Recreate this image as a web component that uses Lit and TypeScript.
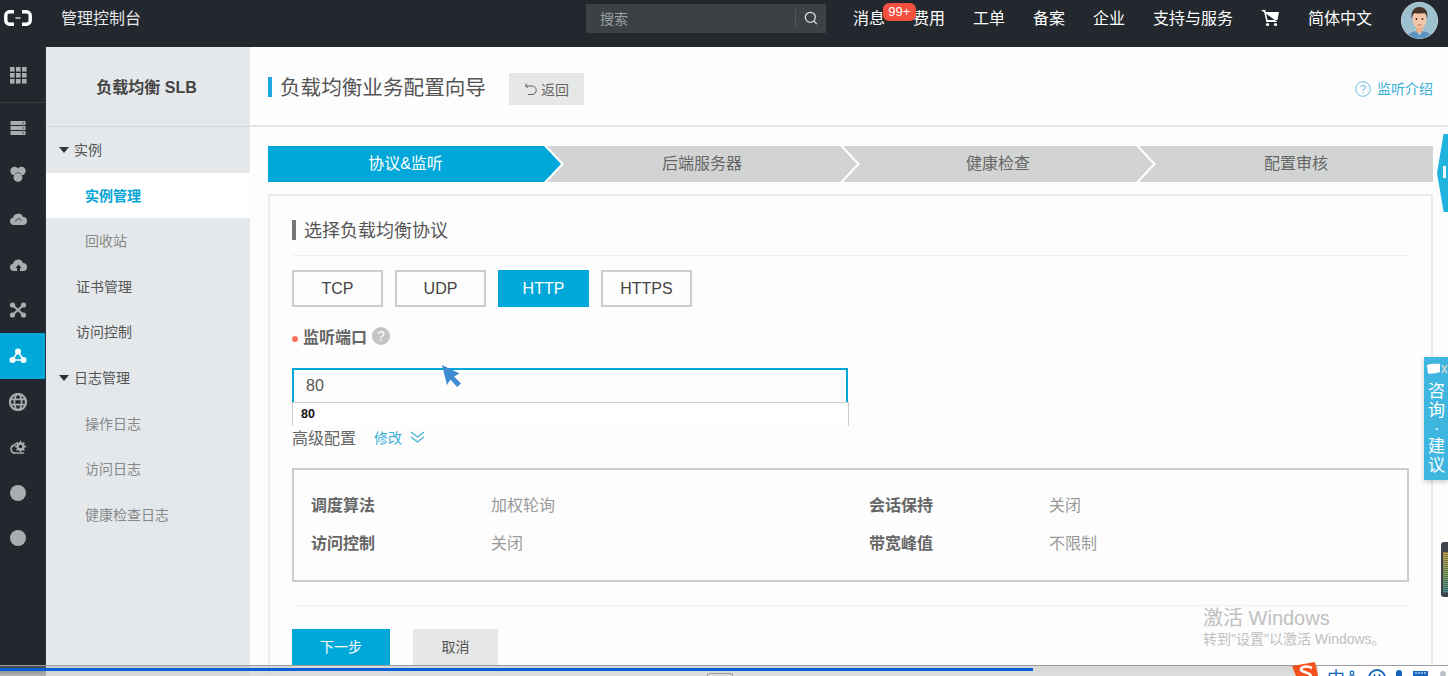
import { LitElement, html, css, svg } from "lit";
import { customElement } from "lit/decorators.js";

const railIcons = [
  svg`<g fill="#a9adb1">${[0, 6, 12].flatMap((y) => [0, 6, 12].map((x) => svg`<rect x="${x + 1}" y="${y + 1}" width="4.600" height="4.600"/>`))}</g>`,
  svg`<g fill="#a9adb1"><rect x="1.500" y="2" width="15" height="4"/><rect x="1.500" y="7" width="15" height="4"/><rect x="1.500" y="12" width="15" height="4"/></g><g fill="#23282e"><circle cx="14" cy="4" r=".7"/><circle cx="14" cy="9" r=".7"/><circle cx="14" cy="14" r=".7"/></g>`,
  svg`<g fill="#a9adb1"><circle cx="5.500" cy="6" r="4.200"/><circle cx="12.500" cy="6" r="4.200"/><circle cx="9" cy="12.500" r="4.400"/></g><path d="M5.500 9 9 7.500 12.500 9" stroke="#23282e" stroke-width=".6" fill="none"/>`,
  svg`<path d="M4.500 15a3.700 3.700 0 0 1-.6-7.300A5.300 5.300 0 0 1 14 7a4 4 0 0 1 0 8z" fill="#a9adb1"/><path d="M6 11.500 9.500 8l3 3" stroke="#23282e" stroke-width=".8" fill="none"/>`,
  svg`<path d="M4.500 15a3.700 3.700 0 0 1-.6-7.300A5.300 5.300 0 0 1 14 7a4 4 0 0 1 0 8h-3v-3h1.600L9.500 8.600 6.400 12H8v3z" fill="#a9adb1"/>`,
  svg`<g fill="#a9adb1"><circle cx="3.500" cy="4" r="2.600"/><circle cx="14.500" cy="4" r="2.600"/><circle cx="3.500" cy="14" r="2.600"/><circle cx="14.500" cy="14" r="2.600"/></g><path d="M4 4.500l10 9M14 4.500l-10 9" stroke="#a9adb1" stroke-width="2.200"/>`,
  svg`<g fill="#fff"><circle cx="9" cy="4.500" r="3"/><circle cx="3.500" cy="13" r="3"/><circle cx="14.500" cy="13" r="3"/></g><path d="M9 4.500 3.500 13h11z" fill="none" stroke="#fff" stroke-width="1.600"/>`,
  svg`<circle cx="9" cy="9" r="8" fill="none" stroke="#a9adb1" stroke-width="2.200"/><ellipse cx="9" cy="9" rx="3.600" ry="8" fill="none" stroke="#a9adb1" stroke-width="1.800"/><path d="M1.500 6.300h15M1.500 11.700h15" stroke="#a9adb1" stroke-width="1.800"/>`,
  svg`<path d="M6 15a4 4 0 0 1-.8-7.900A4.600 4.600 0 0 1 9 5" fill="none" stroke="#a9adb1" stroke-width="1.600"/><circle cx="11.500" cy="8.500" r="4.200" fill="#a9adb1"/><path d="M11.500 2.800v11.400M5.800 8.500h11.400M7.600 4.600l7.800 7.800M15.400 4.600l-7.800 7.800" stroke="#a9adb1" stroke-width="1.500"/><path d="M4 15h11" stroke="#a9adb1" stroke-width="1.400"/><circle cx="11.500" cy="8.500" r="1.800" fill="#23282e"/>`,
  svg`<circle cx="9" cy="9" r="8" fill="#a9adb1"/>`,
  svg`<circle cx="9" cy="9" r="8" fill="#a9adb1"/>`,
];

@customElement("app-root")
export class AppRoot extends LitElement {
  static styles = css`
    :host {
      display: block;
      position: relative;
      width: 1448px;
      height: 676px;
      overflow: hidden;
      background: #fdfdfd;
      font-family: "Liberation Sans", "Noto Sans CJK SC", sans-serif;
      color: #555;
    }
    .top { height: 47px; background: #23282e; display: flex; align-items: flex-start; padding-right: 10px; box-sizing: border-box; color: #fff; font-size: 16px; }
    .logo { width: 28px; height: 16px; margin: 10px 0 0 4px; }
    .brand { margin: 8px 0 0 29px; line-height: 22px; color: #e8e9ea; }
    .search { margin: 4px 0 0 auto; width: 240px; height: 29px; background: #3c4146; display: flex; align-items: center; box-sizing: border-box; padding: 0 0 2px 14px; font-size: 14px; color: #9da1a4; }
    .search span { flex: 1; }
    .search i { width: 1px; height: 17px; background: #55595d; }
    .search svg { width: 14px; height: 14px; margin: 0 8px; }
    .nav { display: flex; gap: 28px; margin: 8px 0 0 27px; line-height: 22px; align-items: flex-start; }
    .msg { position: relative; }
    .badge { position: absolute; left: 30px; top: -5px; width: 33px; height: 18px; border-radius: 6px; background: #f4503f; color: #fff; font-size: 13px; line-height: 18px; text-align: center; }
    .cart { width: 18px; height: 18px; margin-top: 1px; }
    .lang { margin-left: 1px; }
    .avatar { width: 37px; height: 37px; margin: 2px 0 0 29px; }

    .body { display: flex; height: 629px; }
    .rail { width: 46px; background: #23282e; flex: none; border-right: 1px solid #30353a; box-sizing: border-box; }
    .rail-item { height: 45.6px; display: flex; align-items: center; padding-left: 9px; box-sizing: border-box; }
    .rail-item.first { height: 56px; border-bottom: 1px solid #383d42; margin-bottom: 2.2px; }
    .rail-item.on { background: #00a8da; }
    .rail-item svg { width: 18px; height: 18px; }

    .side { width: 204px; flex: none; background: #e4e8eb; font-size: 14px; }
    .side-head { height: 80px; border-bottom: 1px solid #d3d6d8; box-sizing: border-box; display: flex; align-items: center; justify-content: center; font-size: 16px; font-weight: 700; color: #444; padding: 0 3px 2px 0; }
    .side-item { height: 45.6px; line-height: 46px; box-sizing: border-box; color: #555; padding-left: 30px; }
    .side-item.group { padding-left: 13px; display: flex; align-items: center; gap: 5px; }
    .side-item.group::before { content: ""; border: 5px solid transparent; border-top: 6px solid #333; border-bottom: 0; }
    .side-item.sub { padding-left: 39px; color: #888; }
    .side-item.on { background: #fff; color: #00a4d6; font-weight: 700; }

    .main { flex: 1; min-width: 0; }
    .page-head { height: 80px; border-bottom: 2px solid #e4e4e4; box-sizing: border-box; display: flex; align-items: flex-start; padding: 0 15px 0 18px; }
    .page-title { margin-top: 30px; border-left: 4px solid #1ea9e1; height: 20px; display: flex; align-items: center; padding: 0 0 2px 8px; box-sizing: border-box; font-size: 20.6px; color: #555; white-space: nowrap; }
    .back { margin: 26px 0 0 23px; width: 75px; height: 32px; background: #e6e7e7; display: flex; align-items: center; justify-content: center; gap: 3px; padding-bottom: 1px; box-sizing: border-box; font-size: 14px; color: #666; }
    .back svg { width: 14px; height: 14px; }
    .help { margin: 32px 0 0 auto; display: flex; align-items: center; gap: 6px; font-size: 14px; line-height: 20px; color: #3cb0d8; }
    .help svg { width: 16px; height: 16px; }

    .content { padding: 19px 15px 0 18px; }
    .steps { display: flex; height: 36px; font-size: 16px; color: #666; }
    .step { height: 36px; width: 310px; margin-left: -14px; flex: none; background: #d2d3d3; display: flex; align-items: center; justify-content: center; box-sizing: border-box; padding-bottom: 4px; clip-path: polygon(0 0, calc(100% - 17px) 0, 100% 50%, calc(100% - 17px) 100%, 0 100%, 17px 50%); }
    .step.first { width: 293px; margin-left: 0; background: #00a8da; color: #fff; padding-right: 18px; clip-path: polygon(0 0, calc(100% - 17px) 0, 100% 50%, calc(100% - 17px) 100%, 0 100%); }
    .step.last { width: 294px; padding-left: 20px; clip-path: polygon(0 0, 100% 0, 100% 100%, 0 100%, 17px 50%); }

    .card { margin-top: 12px; border: 2px solid #ececec; border-bottom: 0; padding: 0 22px; height: 480px; box-sizing: border-box; }
    .card-head { margin-top: 24px; padding-bottom: 15px; border-bottom: 1px solid #f1f1f1; }
    .card-title { border-left: 4px solid #777; height: 20px; padding: 0 0 2px 8px; box-sizing: border-box; display: flex; align-items: center; font-size: 18px; color: #555; }
    .protos { display: flex; gap: 12px; margin-top: 14px; }
    .proto { width: 91px; height: 37px; border: 2px solid #ccc; box-sizing: border-box; display: flex; align-items: center; justify-content: center; font-size: 16px; color: #444; }
    .proto.on { background: #00a8da; border-color: #00a8da; color: #fff; }
    .field-label { margin-top: 20px; display: flex; align-items: center; height: 20px; padding-bottom: 2px; box-sizing: border-box; font-size: 16px; font-weight: 700; color: #666; }
    .dot { width: 6px; height: 6px; border-radius: 50%; background: #fb7460; margin-right: 5px; margin-top: 5px; }
    .q { width: 18px; height: 18px; border-radius: 50%; background: #c4c4c4; color: #fff; font-size: 14px; font-weight: 400; line-height: 18px; text-align: center; margin: -1px 0 0 5px; }
    .input-wrap { position: relative; width: 556px; margin-top: 21px; }
    .input { height: 34px; border: 2px solid #00a8da; border-bottom: 0; box-sizing: border-box; font-size: 16px; line-height: 32px; padding-left: 12px; color: #555; }
    .suggest { position: absolute; left: 0; top: 100%; width: 557px; height: 24px; box-sizing: border-box; background: #fff; border: 1px solid #ccc; border-bottom: 0; font-size: 12.5px; line-height: 23px; font-weight: 700; color: #111; padding-left: 8px; }
    .adv { margin-top: 26px; height: 20px; display: flex; align-items: center; padding-bottom: 2px; box-sizing: border-box; font-size: 16px; color: #666; }
    .adv a { margin-left: 18px; color: #3cb0d8; font-size: 14px; }
    .adv svg { width: 15px; height: 12px; margin-left: 8px; }
    .summary { margin-top: 20px; height: 114px; border: 2px solid #ccc; box-sizing: border-box; padding: 25px 0 0 17px; display: grid; grid-template-columns: 180px 378px 180px 1fr; grid-auto-rows: 22px; row-gap: 16px; font-size: 16px; line-height: 22px; color: #999; }
    .summary b { color: #666; font-weight: 700; }
    .rule { margin-top: 23px; border-top: 1px solid #f1f1f1; }
    .actions { display: flex; gap: 23px; margin-top: 23px; font-size: 14px; }
    .btn { height: 36px; width: 85px; background: #e6e7e7; color: #555; display: flex; align-items: center; justify-content: center; padding-bottom: 3px; box-sizing: border-box; }
    .btn.primary { width: 98px; background: #00a8da; color: #fff; }

    .handle { position: absolute; left: 1437px; top: 134px; width: 11px; height: 78px; background: #1fb3de; clip-path: polygon(60% 0, 100% 0, 100% 100%, 60% 100%, 0 50%); }
    .handle::after { content: ""; position: absolute; left: 6px; top: 32px; width: 3px; height: 12px; background: #e8f7fb; }
    .consult { position: absolute; left: 1424px; top: 357px; width: 24px; height: 123px; background: #3eb6e0; box-shadow: 0 2px 5px rgba(0,0,0,.2); color: #fff; font-size: 17px; line-height: 19px; padding: 25px 0 0 1px; box-sizing: border-box; display: flex; flex-direction: column; align-items: center; }
    .consult .sep { line-height: 17px; }
    .consult svg { position: absolute; left: 2px; top: 6px; width: 22px; height: 13px; }
    .meter { position: absolute; left: 1441px; top: 542px; width: 10px; height: 55px; border-radius: 3px; background: #3d424c; overflow: hidden; }
    .meter::after { content: ""; position: absolute; left: 2px; right: 0; top: 10px; bottom: 4px; background: repeating-linear-gradient(rgba(0,0,0,.3) 0 1px, transparent 1px 2px), linear-gradient(#c9a85a, #7fa36a 60%, #4f8f95); }
    .cursor { position: absolute; left: 441px; top: 364px; width: 22px; height: 25px; filter: blur(.6px); }
    .mark { position: absolute; left: 1203px; top: 606px; color: #c0c0c0; font-size: 20px; line-height: 24px; white-space: nowrap; }
    .mark div { font-size: 14px; line-height: 18px; margin-top: 0; }
    .bar { position: absolute; left: 0; top: 665px; width: 1448px; height: 11px; border-top: 1px solid #9a9da1; box-sizing: border-box; background: linear-gradient(rgba(150,150,150,.35) 0 2px, rgba(190,190,190,.6) 2px, rgba(215,215,215,.8)); }
    .bar i { display: block; width: 1033px; height: 2.5px; margin-top: 2px; background: #0a5fd8; }
    .tray { position: absolute; left: 1318px; top: 666px; width: 130px; height: 10px; background: #fff; overflow: hidden; display: flex; color: #1565c0; font-size: 18px; line-height: 26px; padding-left: 9px; box-sizing: border-box; }
    .tray span { height: 10px; width: 20px; flex: none; }
    .tray svg { width: 100px; height: 10px; flex: none; }
    .sogou { position: absolute; left: 1292px; top: 662px; width: 26px; height: 14px; }
    .arc { position: absolute; left: 707px; top: 673px; width: 26px; height: 3px; border: 1px solid #999; border-bottom: 0; border-radius: 13px 13px 0 0; box-sizing: border-box; }
  `;

  render() {
    const items: [string, string][] = [
      ["实例", "group"], ["实例管理", "sub on"], ["回收站", "sub"], ["证书管理", ""], ["访问控制", ""],
      ["日志管理", "group"], ["操作日志", "sub"], ["访问日志", "sub"], ["健康检查日志", "sub"],
    ];
    return html`
      <div class="top">
        <svg class="logo" viewBox="0 0 28 16"><path d="M10 1.800H5.500A3.700 3.700 0 0 0 1.800 5.500v5a3.700 3.700 0 0 0 3.700 3.700H10M18 1.800h4.500a3.700 3.700 0 0 1 3.700 3.700v5a3.700 3.700 0 0 1-3.700 3.700H18" fill="none" stroke="#fff" stroke-width="3.400"/><path d="M11.500 8h5" stroke="#fff" stroke-width="1.200"/></svg>
        <div class="brand">管理控制台</div>
        <div class="search"><span>搜索</span><i></i><svg viewBox="0 0 14 14"><circle cx="6.300" cy="6.300" r="5" fill="none" stroke="#ddd" stroke-width="1.300"/><path d="m9.800 9.800 3 3.300" stroke="#ddd" stroke-width="1.300"/></svg></div>
        <div class="nav">
          <span class="msg">消息<span class="badge">99+</span></span>
          <span>费用</span><span>工单</span><span>备案</span><span>企业</span><span>支持与服务</span>
          <svg class="cart" viewBox="0 0 18 18"><path d="M0 1h3.500l.8 2H18l-1.500 8H5.500l-.5 2h11.500" fill="#fff"/><path d="M3.500 1 6 12" stroke="#fff" stroke-width="1.500"/><circle cx="6.500" cy="15.500" r="1.600" fill="#fff"/><circle cx="14.500" cy="15.500" r="1.600" fill="#fff"/></svg>
          <span class="lang">简体中文</span>
        </div>
        <svg class="avatar" viewBox="0 0 37 37">
          <defs><clipPath id="av"><circle cx="18.500" cy="18.500" r="18"/></clipPath></defs>
          <circle cx="18.500" cy="18.500" r="18.500" fill="#e2e8ec"/>
          <g clip-path="url(#av)">
            <rect width="37" height="37" fill="#9cc0d0"/>
            <path d="M5 38c1-7 7-9 13.500-9S31 31 32 38z" fill="#5f93bd"/>
            <path d="M14 27h9l-4.500 6z" fill="#eef3f5"/>
            <path d="M15 22h7v7l-3.500 2.500L15 29z" fill="#e3ae8e"/>
            <ellipse cx="18.500" cy="17" rx="7" ry="9.500" fill="#f2c6a6"/>
            <path d="M10.800 17c-1.300-9 3-12 7.700-12s9 3 7.700 12c-.6-3-1-5-2.700-6-3 .8-7 .8-10 0-1.700 1-2 3-2.700 6z" fill="#4b3226"/>
            <circle cx="15.500" cy="17" r=".9" fill="#33241b"/><circle cx="21.500" cy="17" r=".9" fill="#33241b"/>
            <path d="M16.500 23h4" stroke="#b5654f" stroke-width=".9"/>
          </g>
        </svg>
      </div>
      <div class="body">
        <div class="rail">
          ${railIcons.map((ic, i) => html`<div class="rail-item ${i === 0 ? "first" : ""} ${i === 6 ? "on" : ""}"><svg viewBox="0 0 18 18">${ic}</svg></div>`)}
        </div>
        <div class="side">
          <div class="side-head">负载均衡 SLB</div>
          ${items.map(([t, c]) => html`<div class="side-item ${c}">${t}</div>`)}
        </div>
        <div class="main">
          <div class="page-head">
            <div class="page-title">负载均衡业务配置向导</div>
            <div class="back"><svg viewBox="0 0 14 14"><path d="M3 1.500 1.200 4 4 5.500M1.500 4H8a4 4 0 0 1 0 8.500H4" fill="none" stroke="#666" stroke-width="1"/></svg>返回</div>
            <div class="help"><svg viewBox="0 0 16 16"><circle cx="8" cy="8" r="7.300" fill="none" stroke="#6cc0de" stroke-width="1"/><text x="8" y="12" font-size="11" text-anchor="middle" fill="#6cc0de">?</text></svg>监听介绍</div>
          </div>
          <div class="content">
            <div class="steps">
              <div class="step first">协议&监听</div>
              <div class="step">后端服务器</div>
              <div class="step">健康检查</div>
              <div class="step last">配置审核</div>
            </div>
            <div class="card">
              <div class="card-head"><div class="card-title">选择负载均衡协议</div></div>
              <div class="protos">
                <div class="proto">TCP</div><div class="proto">UDP</div><div class="proto on">HTTP</div><div class="proto">HTTPS</div>
              </div>
              <div class="field-label"><span class="dot"></span>监听端口<span class="q">?</span></div>
              <div class="input-wrap">
                <div class="input">80</div>
                <div class="suggest">80</div>
              </div>
              <div class="adv">高级配置<a>修改</a><svg viewBox="0 0 15 12"><path d="m1 1 6.500 5L14 1M1 6l6.500 5L14 6" fill="none" stroke="#3cb0d8" stroke-width="1.100"/></svg></div>
              <div class="summary">
                <b>调度算法</b><span>加权轮询</span><b>会话保持</b><span>关闭</span>
                <b>访问控制</b><span>关闭</span><b>带宽峰值</b><span>不限制</span>
              </div>
              <div class="rule"></div>
              <div class="actions"><div class="btn primary">下一步</div><div class="btn">取消</div></div>
            </div>
          </div>
        </div>
      </div>

      <div class="handle"></div>
      <div class="consult">
        <svg viewBox="0 0 22 13"><path d="M1 2c4-1.500 9-1.500 13-1v8c-4 1.500-9 2-12 1.500z" fill="#fff"/><path d="m16 2 5 8m0-8-5 8" stroke="#cfd4d6" stroke-width="1.500"/></svg>
        <span>咨</span><span>询</span><span class="sep">·</span><span>建</span><span>议</span>
      </div>
      <div class="meter"></div>
      <svg class="cursor" viewBox="0 0 22 25"><path d="M1 1 6 21l3.500-5.500L16 23l4-3.500-7-7 5.500-3z" fill="#3d8bd0"/></svg>
      <div class="mark">激活 Windows<div>转到"设置"以激活 Windows。</div></div>
      <div class="bar"><i></i></div>
      <div class="arc"></div>
      <svg class="sogou" viewBox="0 0 26 14"><path d="M0 4 23 0l3 14H4z" fill="#f4511e"/><path d="M20 6c-5-2.500-11-1.500-11 1.500s9 2.500 10 6.500" fill="none" stroke="#fff" stroke-width="2.600"/></svg>
      <div class="tray">
        <span>中</span>
        <svg viewBox="0 0 100 10"><circle cx="5" cy="7" r="1.800" fill="none" stroke="#1565c0" stroke-width="1.200"/><path d="M2 10h6" stroke="#1565c0" stroke-width="1.200"/><circle cx="30" cy="12" r="8" fill="none" stroke="#1565c0" stroke-width="1.800"/><path d="M27.500 8v4M32.500 8v4" stroke="#1565c0" stroke-width="1.500"/><rect x="49" y="4" width="6" height="8" rx="3" fill="#1565c0"/><rect x="66" y="5" width="15" height="7" fill="#1565c0"/><path d="M68 7h11" stroke="#fff" stroke-dasharray="2 1" stroke-width="1"/><circle cx="96" cy="8" r="3" fill="#b9bfc6"/></svg>
      </div>
    `;
  }
}
